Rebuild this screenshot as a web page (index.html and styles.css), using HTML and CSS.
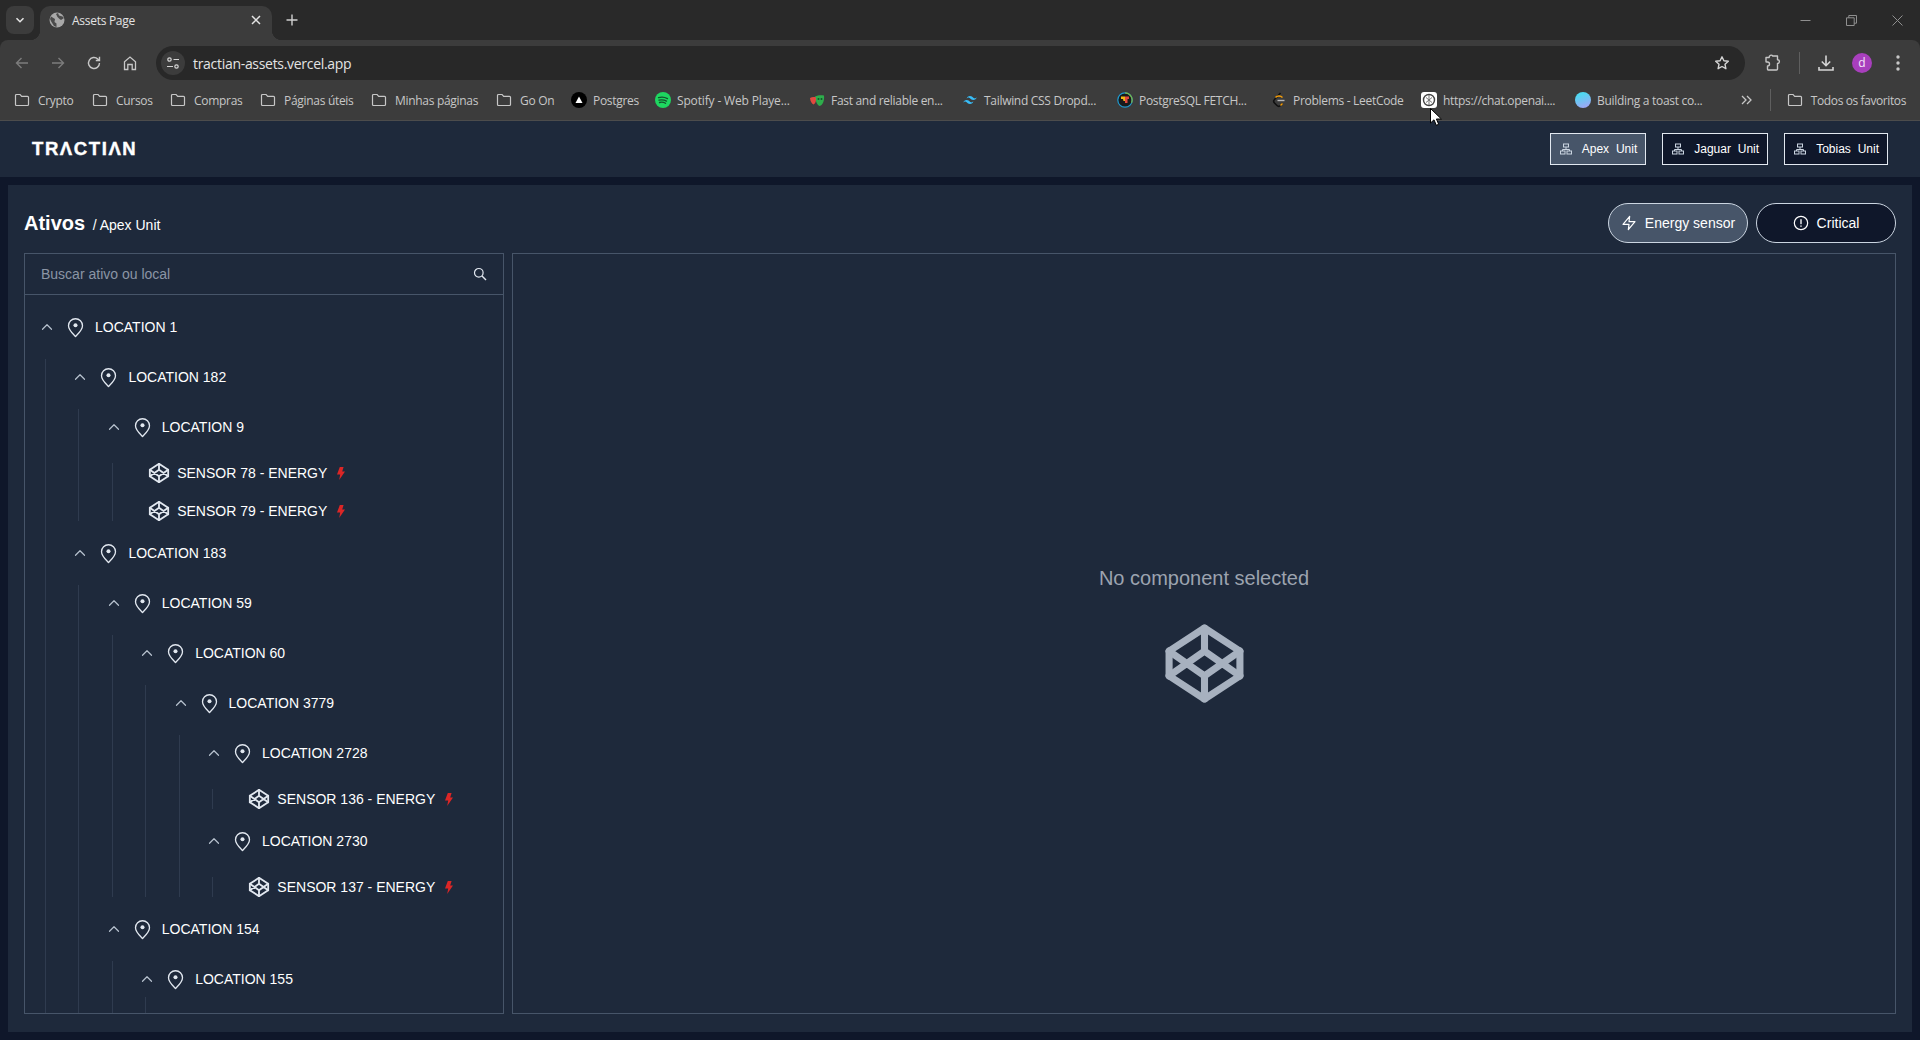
FILE: index.html
```html
<!DOCTYPE html>
<html lang="pt-BR">
<head>
<meta charset="utf-8">
<title>Assets Page</title>
<link rel="stylesheet" href="styles.css">
</head>
<body>
<svg class="sprite" aria-hidden="true">
  <symbol id="i-folder" viewBox="0 0 16 16"><path d="M1.5 3.5a1 1 0 0 1 1-1h3.6l1.6 1.8h5.8a1 1 0 0 1 1 1v7.2a1 1 0 0 1-1 1H2.500a1 1 0 0 1-1-1z" fill="none" stroke="currentColor" stroke-width="1.2"/></symbol>
  <symbol id="i-chev" viewBox="0 0 24 24"><path d="m18 15-6-6-6 6" fill="none" stroke="currentColor" stroke-width="1.6" stroke-linecap="round" stroke-linejoin="round"/></symbol>
  <symbol id="i-pin" viewBox="0 0 24 24"><path d="M20 10c0 5-5.500 9.500-8 12.300C9.500 19.500 4 15 4 10a8 8 0 0 1 16 0" fill="none" stroke="currentColor" stroke-width="1.5" stroke-linejoin="round"/><circle cx="12" cy="9.300" r="2.300" fill="currentColor"/></symbol>
  <symbol id="i-code" viewBox="0 0 24 24"><g fill="none" stroke="currentColor" stroke-width="2" stroke-linecap="round" stroke-linejoin="round"><path d="M12 2 22 8.500V15.500L12 22 2 15.500V8.500Z"/><path d="M12 22V15.500M22 8.500 12 15.500 2 8.500M2 15.500 12 8.500 22 15.500M12 2V8.500"/></g></symbol>
  <symbol id="i-bolt" viewBox="0 0 8 13"><path d="M2.800 0H6.600L5.200 4.600H8L2.200 13 3.200 7.600H0z" fill="currentColor"/></symbol>
  <symbol id="i-unit" viewBox="0 0 12 12"><g fill="none" stroke="currentColor" stroke-width="1"><rect x="3.500" y="1" width="5" height="3"/><rect x=".5" y="8" width="4.500" height="3"/><rect x="7" y="8" width="4.500" height="3"/><path d="M6 4v2.500M2.500 8V6.500h7V8"/></g></symbol>
</svg>

<header class="browser">
  <div class="tabstrip">
    <button class="tab-search" aria-label="Pesquisar guias"><svg width="12" height="12" viewBox="0 0 12 12"><path d="m2.500 4.200 3.500 3.500 3.500-3.500" fill="none" stroke="#e3e3e3" stroke-width="1.600"/></svg></button>
    <div class="tab">
      <svg class="tab-fav" width="16" height="16" viewBox="0 0 16 16"><circle cx="8" cy="8" r="7.500" fill="#a8a8a8"/><path d="M2 4.500 6 7l-.5 3 2 1.500V15L5 14 2.500 10 1 7zM9 1l1 2.500 3.500 1L15 6l-3 2-1.500-1L8.500 5 7 2z" fill="#4a4a4a"/></svg>
      <span class="tab-title">Assets Page</span>
      <svg class="tab-close" width="10" height="10" viewBox="0 0 10 10"><path d="m1 1 8 8M9 1 1 9" stroke="#e3e3e3" stroke-width="1.500"/></svg>
    </div>
    <button class="new-tab" aria-label="Nova guia"><svg width="12" height="12" viewBox="0 0 12 12"><path d="M6 .5v11M.5 6h11" stroke="#d0d0d0" stroke-width="1.400"/></svg></button>
    <div class="window-controls">
      <span class="win-btn"><svg width="11" height="11" viewBox="0 0 11 11"><path d="M.5 5.500h10" stroke="#8f8f8f"/></svg></span>
      <span class="win-btn"><svg width="11" height="11" viewBox="0 0 11 11"><path d="M.5 2.800h7.700v7.700H.5zM2.800 2.800V.5h7.700v7.700H8.200" fill="none" stroke="#8f8f8f"/></svg></span>
      <span class="win-btn"><svg width="11" height="11" viewBox="0 0 11 11"><path d="m.5.500 10 10M10.500.500l-10 10" stroke="#8f8f8f"/></svg></span>
    </div>
  </div>

  <div class="toolbar">
    <span class="tool"><svg width="16" height="16" viewBox="0 0 16 16"><path d="M14 8H3M7.500 3 2.500 8l5 5" fill="none" stroke="#7c7c7c" stroke-width="1.400"/></svg></span>
    <span class="tool"><svg width="16" height="16" viewBox="0 0 16 16"><path d="M2 8h11M8.500 3l5 5-5 5" fill="none" stroke="#7c7c7c" stroke-width="1.400"/></svg></span>
    <span class="tool"><svg width="16" height="16" viewBox="0 0 16 16"><path d="M13.500 8a5.500 5.500 0 1 1-1.700-4L13.500 5.500M13.500 1.800v3.700H9.800" fill="none" stroke="#c7c7c7" stroke-width="1.400"/></svg></span>
    <span class="tool"><svg width="16" height="16" viewBox="0 0 16 16"><path d="M2.500 14.500V6.700L8 2l5.500 4.700v7.800h-3.300V9.500H5.800v5z" fill="none" stroke="#c7c7c7" stroke-width="1.300"/></svg></span>
    <div class="address">
      <span class="site-info"><svg width="14" height="14" viewBox="0 0 14 14"><g fill="none" stroke="#d5d5d5" stroke-width="1.200"><circle cx="3.500" cy="3.500" r="1.700"/><path d="M7.500 3.500H13M1 10.500h6"/><circle cx="10.500" cy="10.500" r="1.700"/></g></svg></span>
      <span class="url">tractian-assets.vercel.app</span>
      <svg class="star" width="16" height="16" viewBox="0 0 16 16"><path d="m8 1.800 1.900 4 4.400.5-3.300 3 .9 4.400L8 11.500l-3.900 2.200.9-4.400-3.300-3 4.400-.5z" fill="none" stroke="#d5d5d5" stroke-width="1.400" stroke-linejoin="round"/></svg>
    </div>
    <span class="tool tool-ext"><svg width="18" height="18" viewBox="0 0 18 18"><path d="M2 3.500h3.200a2 2 0 0 1 3.600-1.500h4.700v3.700a1.900 1.900 0 0 1 0 3.800V15a1 1 0 0 1-1 1H4.500a1 1 0 0 1-1-1v-3h0a2 2 0 0 0 0-4H2.500a.5.500 0 0 1-.5-.5z" fill="none" stroke="#c7c7c7" stroke-width="1.400" stroke-linejoin="round"/></svg></span>
    <span class="tool-sep"></span>
    <span class="tool"><svg width="18" height="18" viewBox="0 0 18 18"><path d="M9 1.500v10M4.800 7.500 9 11.700l4.200-4.200M2 13v3h14v-3" fill="none" stroke="#d5d5d5" stroke-width="1.600"/></svg></span>
    <span class="tool"><span class="avatar">d</span></span>
    <span class="tool"><svg width="4" height="16" viewBox="0 0 4 16"><circle cx="2" cy="2" r="1.700" fill="#c7c7c7"/><circle cx="2" cy="8" r="1.700" fill="#c7c7c7"/><circle cx="2" cy="14" r="1.700" fill="#c7c7c7"/></svg></span>
  </div>

  <nav class="bookmarks">
    <div class="bm-list">
      <span class="bm"><svg class="bm-icon"><use href="#i-folder"/></svg><span>Crypto</span></span>
      <span class="bm"><svg class="bm-icon"><use href="#i-folder"/></svg><span>Cursos</span></span>
      <span class="bm"><svg class="bm-icon"><use href="#i-folder"/></svg><span>Compras</span></span>
      <span class="bm"><svg class="bm-icon"><use href="#i-folder"/></svg><span>Páginas úteis</span></span>
      <span class="bm"><svg class="bm-icon"><use href="#i-folder"/></svg><span>Minhas páginas</span></span>
      <span class="bm"><svg class="bm-icon"><use href="#i-folder"/></svg><span>Go On</span></span>
      <span class="bm bm-fav"><svg class="bm-icon" viewBox="0 0 16 16"><circle cx="8" cy="8" r="8" fill="#000"/><path d="M8 4.500 11.500 11h-7z" fill="#fff"/></svg><span>Postgres</span></span>
      <span class="bm bm-fav"><svg class="bm-icon" viewBox="0 0 16 16"><circle cx="8" cy="8" r="8" fill="#1ed760"/><path d="M3.500 5.700c3-.9 6.200-.6 9 .9M4 8.200c2.500-.7 5.200-.4 7.500.9M4.500 10.500c2-.5 4.200-.3 6 .8" fill="none" stroke="#14532d" stroke-width="1.300" stroke-linecap="round"/></svg><span class="bm-wide">Spotify - Web Playe...</span></span>
      <span class="bm bm-fav"><svg class="bm-icon" viewBox="0 0 16 16"><path d="M6 4.500c3-1.500 6-1.500 9-1 .5 5-1 9.500-4.500 10.500C8 13 6.500 9 6 4.500z" fill="#2ead4b"/><path d="M1 6c2-1 4-1.200 6-.5.300 3.500-.5 6-2.500 7C2.500 11.500 1.300 9 1 6z" fill="#e2493f"/><circle cx="9.500" cy="7" r="1" fill="#14532d"/><circle cx="12.500" cy="7" r="1" fill="#14532d"/></svg><span>Fast and reliable en...</span></span>
      <span class="bm bm-fav"><svg class="bm-icon" viewBox="0 0 24 24"><path d="M12 6c-2.670 0-4.330 1.330-5 4 1-1.330 2.170-1.830 3.500-1.500.76.190 1.300.740 1.910 1.350.980 1 2.120 2.150 4.590 2.150 2.670 0 4.330-1.330 5-4-1 1.330-2.170 1.830-3.500 1.500-.760-.190-1.300-.740-1.910-1.350C15.610 7.150 14.470 6 12 6zm-5 6c-2.670 0-4.330 1.330-5 4 1-1.330 2.170-1.830 3.500-1.500.760.190 1.300.740 1.910 1.350C8.390 16.850 9.530 18 12 18c2.670 0 4.330-1.330 5-4-1 1.330-2.170 1.830-3.500 1.500-.760-.190-1.300-.740-1.910-1.350C10.610 13.150 9.470 12 7 12z" fill="#38bdf8"/></svg><span>Tailwind CSS Dropd...</span></span>
      <span class="bm bm-fav"><svg class="bm-icon" viewBox="0 0 16 16"><circle cx="8" cy="8" r="7.200" fill="#1a1a1a" stroke="#1f9bd1" stroke-width="1.200"/><path d="M8 .8a7.200 7.200 0 0 1 6.500 10" fill="none" stroke="#7ab648" stroke-width="1.200"/><path d="M4 4.500h4V9H6.500L6 7H4z" fill="#f5b914"/><path d="M8 4.500h4V7h-1.500v4H8z" fill="#e2493f"/></svg><span>PostgreSQL FETCH...</span></span>
      <span class="bm bm-fav"><svg class="bm-icon" viewBox="0 0 16 16"><path d="M9.500 1 3.500 7.500a2.500 2.500 0 0 0 0 3.500l2.500 2.500a2.500 2.500 0 0 0 3.500 0L11.500 11.500" fill="none" stroke="#111" stroke-width="1.600"/><path d="M4.500 5.500C6 3.800 9.500 3.500 11.500 5.500M9.500 13.500l2-2" fill="none" stroke="#f59e0b" stroke-width="1.500"/><path d="M6.500 8.500h7" stroke="#b8b8b8" stroke-width="1.400"/></svg><span>Problems - LeetCode</span></span>
      <span class="bm bm-fav"><svg class="bm-icon" viewBox="0 0 16 16"><rect width="16" height="16" rx="3" fill="#fff"/><circle cx="8" cy="8" r="5.500" fill="none" stroke="#444" stroke-width="1.400"/><path d="M5 5.500 11 10.500M11 5.500 5 10.500M8 3v10" stroke="#777" stroke-width="1"/></svg><span>https://chat.openai....</span></span>
      <span class="bm bm-fav"><span class="orb"></span><span>Building a toast co...</span></span>
    </div>
    <div class="bm-right">
      <svg class="bm-more" width="11" height="10" viewBox="0 0 11 10"><path d="m1 1 4 4-4 4M6 1l4 4-4 4" fill="none" stroke="#c7c7c7" stroke-width="1.300"/></svg>
      <span class="bm-sep"></span>
      <span class="bm bm-all"><svg class="bm-icon"><use href="#i-folder"/></svg><span>Todos os favoritos</span></span>
    </div>
  </nav>
</header>

<svg class="cursor" width="12" height="18" viewBox="0 0 12 18"><path d="M.5.500v14.500l3.500-3.200 2.300 5.500 2.400-1-2.300-5.300h5z" fill="#fff" stroke="#000" stroke-width="1"/></svg>

<div class="app-header">
  <span class="logo" aria-label="TRACTIAN">TRΛCTIΛN</span>
  <div class="units">
    <button class="unit unit-active"><svg class="unit-icon"><use href="#i-unit"/></svg>Apex Unit</button>
    <button class="unit"><svg class="unit-icon"><use href="#i-unit"/></svg>Jaguar Unit</button>
    <button class="unit"><svg class="unit-icon"><use href="#i-unit"/></svg>Tobias Unit</button>
  </div>
</div>

<main class="panel">
  <div class="panel-head">
    <h1 class="title">Ativos <span class="crumb">/ Apex Unit</span></h1>
    <div class="filters">
      <button class="filter filter-active"><svg width="16" height="16" viewBox="0 0 24 24"><path d="M13 2 3 14h9l-1 8 10-12h-9z" fill="none" stroke="currentColor" stroke-width="1.800" stroke-linecap="round" stroke-linejoin="round"/></svg>Energy sensor</button>
      <button class="filter"><svg width="16" height="16" viewBox="0 0 24 24"><circle cx="12" cy="12" r="10" fill="none" stroke="currentColor" stroke-width="1.800"/><path d="M12 7v6M12 16.500v.5" stroke="currentColor" stroke-width="2" stroke-linecap="round"/></svg>Critical</button>
    </div>
  </div>

  <div class="panel-body">
    <section class="tree-panel">
      <div class="search">
        <input class="search-input" type="text" placeholder="Buscar ativo ou local">
        <svg class="search-icon" width="14" height="14" viewBox="0 0 14 14"><circle cx="5.800" cy="5.800" r="4.300" fill="none" stroke="#e2e8f0" stroke-width="1.200"/><path d="m9 9 4 4" stroke="#e2e8f0" stroke-width="1.400"/></svg>
      </div>
      <div class="tree">
        <div class="loc"><svg class="chev"><use href="#i-chev"/></svg><svg class="pin"><use href="#i-pin"/></svg><span>LOCATION 1</span></div>
        <div class="kids">
          <div class="loc"><svg class="chev"><use href="#i-chev"/></svg><svg class="pin"><use href="#i-pin"/></svg><span>LOCATION 182</span></div>
          <div class="kids">
            <div class="loc"><svg class="chev"><use href="#i-chev"/></svg><svg class="pin"><use href="#i-pin"/></svg><span>LOCATION 9</span></div>
            <div class="kids">
              <div class="sensor"><svg class="comp"><use href="#i-code"/></svg><span>SENSOR 78 - ENERGY</span><svg class="bolt"><use href="#i-bolt"/></svg></div>
              <div class="sensor"><svg class="comp"><use href="#i-code"/></svg><span>SENSOR 79 - ENERGY</span><svg class="bolt"><use href="#i-bolt"/></svg></div>
            </div>
          </div>
          <div class="loc"><svg class="chev"><use href="#i-chev"/></svg><svg class="pin"><use href="#i-pin"/></svg><span>LOCATION 183</span></div>
          <div class="kids">
            <div class="loc"><svg class="chev"><use href="#i-chev"/></svg><svg class="pin"><use href="#i-pin"/></svg><span>LOCATION 59</span></div>
            <div class="kids">
              <div class="loc"><svg class="chev"><use href="#i-chev"/></svg><svg class="pin"><use href="#i-pin"/></svg><span>LOCATION 60</span></div>
              <div class="kids">
                <div class="loc"><svg class="chev"><use href="#i-chev"/></svg><svg class="pin"><use href="#i-pin"/></svg><span>LOCATION 3779</span></div>
                <div class="kids">
                  <div class="loc"><svg class="chev"><use href="#i-chev"/></svg><svg class="pin"><use href="#i-pin"/></svg><span>LOCATION 2728</span></div>
                  <div class="kids">
                    <div class="sensor"><svg class="comp"><use href="#i-code"/></svg><span>SENSOR 136 - ENERGY</span><svg class="bolt"><use href="#i-bolt"/></svg></div>
                  </div>
                  <div class="loc"><svg class="chev"><use href="#i-chev"/></svg><svg class="pin"><use href="#i-pin"/></svg><span>LOCATION 2730</span></div>
                  <div class="kids">
                    <div class="sensor"><svg class="comp"><use href="#i-code"/></svg><span>SENSOR 137 - ENERGY</span><svg class="bolt"><use href="#i-bolt"/></svg></div>
                  </div>
                </div>
              </div>
            </div>
            <div class="loc"><svg class="chev"><use href="#i-chev"/></svg><svg class="pin"><use href="#i-pin"/></svg><span>LOCATION 154</span></div>
            <div class="kids">
              <div class="loc"><svg class="chev"><use href="#i-chev"/></svg><svg class="pin"><use href="#i-pin"/></svg><span>LOCATION 155</span></div>
              <div class="kids kids-more"></div>
            </div>
          </div>
        </div>
      </div>
    </section>
    <section class="details">
      <p class="empty-text">No component selected</p>
      <svg class="empty-icon"><use href="#i-code"/></svg>
    </section>
  </div>
</main>
</body>
</html>
```
FILE: styles.css
```css
* { box-sizing: border-box; }
html, body { margin: 0; height: 1040px; overflow: hidden; }
body {
  position: relative;
  background: #0f172a;
  color: #fff;
  font-family: "Liberation Sans", Arial, sans-serif;
  display: flex;
  flex-direction: column;
}
button { font: inherit; color: inherit; cursor: pointer; }
.sprite { position: absolute; width: 0; height: 0; }

/* Browser chrome */
.browser { flex: none; background: #292929; font-family: "Open Sans", "Noto Sans", sans-serif; }
.tabstrip {
  height: 40px;
  display: flex;
  padding: 6px 0 0 6px;
}
.tab-search {
  width: 28px; height: 28px; border: 0; border-radius: 8px; padding: 0;
  background: #3c3c3c;
  display: flex; align-items: center; justify-content: center;
}
.tab {
  position: relative;
  width: 232px; height: 34px; margin-left: 6px;
  background: #3c3c3c;
  border-radius: 10px 10px 0 0;
  display: flex; align-items: center;
  padding: 0 11px 6px 9px;
  font-size: 12px; color: #e3e3e3;
}
.tab::before, .tab::after {
  content: ""; position: absolute; bottom: 0; width: 10px; height: 10px;
}
.tab::before { left: -10px; background: radial-gradient(circle at 0 0, transparent 10px, #3c3c3c 10.500px); }
.tab::after { right: -10px; background: radial-gradient(circle at 100% 0, transparent 10px, #3c3c3c 10.500px); }
.tab-fav { flex: none; }
.tab-title { margin: 1px 0 0 7px; flex: 1; letter-spacing: -.28px; }
.tab-close { flex: none; }
.new-tab {
  width: 28px; height: 28px; border: 0; margin-left: 6px; padding: 0; background: none;
  display: flex; align-items: center; justify-content: center;
}
.window-controls { margin-left: auto; display: flex; margin-top: -6px; }
.win-btn { width: 46px; height: 40px; display: flex; align-items: center; justify-content: center; }

.toolbar {
  height: 42px;
  background: #3c3c3c;
  border-radius: 8px 8px 0 0;
  display: flex; align-items: center;
  padding: 4px 4px 0;
}
.tool { flex: none; width: 36px; height: 36px; display: flex; align-items: center; justify-content: center; }
.tool-ext { margin-left: 10px; }
.tool-sep { flex: none; width: 17px; height: 22px; display: flex; justify-content: center; }
.tool-sep::before { content: ""; width: 1px; height: 100%; background: #5f5f5f; }
.avatar {
  width: 20px; height: 20px; border-radius: 50%;
  background: #a83fbd; color: #f5e6f8;
  font-size: 12px; line-height: 20px; text-align: center;
}
.address {
  flex: 1; height: 34px; margin-left: 8px;
  background: #282828; border-radius: 17px;
  display: flex; align-items: center;
  padding: 0 15px 0 5px;
}
.site-info {
  width: 24px; height: 24px; border-radius: 50%;
  background: #3c3c3c;
  display: flex; align-items: center; justify-content: center;
}
.url { margin-left: 8px; flex: 1; font-size: 14px; color: #e3e3e3; letter-spacing: -.3px; }

.bookmarks {
  height: 39px;
  background: #3c3c3c;
  border-bottom: 1px solid #4c4c4c;
  display: flex; align-items: center; justify-content: space-between;
  padding: 0 14px 2px;
  font-size: 12px; color: #c7c7c7;
  letter-spacing: -.3px;
}
.bm-list {
  display: grid;
  grid-template-columns: 78px 78px 90px 111px 125px 75px 84px 154px 153px 155px 154px 150px 154px 130px;
  align-items: center;
}
.bm { display: flex; align-items: center; gap: 8px; white-space: nowrap; }
.bm-fav { gap: 6px; }
.bm-wide { letter-spacing: -.15px; }
.bm-icon { width: 16px; height: 16px; flex: none; }
.orb {
  width: 16px; height: 16px; border-radius: 50%; flex: none;
  background: linear-gradient(160deg, #4fd8f0 20%, #9aa8f5 85%);
}
.bm-right { display: flex; align-items: center; }
.bm-more { margin-right: 18px; }
.bm-sep { width: 1px; height: 22px; background: #5f5f5f; margin-right: 16px; }
.bm-all { letter-spacing: -.4px; }

.cursor { position: absolute; left: 1430px; top: 108px; z-index: 5; }

/* App header */
.app-header {
  flex: none; height: 56px;
  background: #1e293b;
  display: flex; align-items: center; justify-content: space-between;
  padding: 0 32px;
}
.logo {
  font-family: "Liberation Sans", Arial, sans-serif;
  font-weight: 700; font-size: 18.500px; letter-spacing: 1.600px;
  line-height: 1; color: #fff;
  -webkit-text-stroke: .4px #fff;
}
.units { display: flex; gap: 16px; }
.unit {
  height: 32px;
  display: flex; align-items: center; gap: 10px;
  padding: 0 8px 0 9px;
  border: 1px solid #e2e8f0;
  background: #0f172a;
  font-size: 12px; word-spacing: 3.500px;
  white-space: nowrap;
}
.unit-active { background: #475569; }
.unit-icon { width: 12px; height: 12px; color: #cbd5e1; flex: none; }

/* Main panel */
.panel {
  flex: none; height: 847px; margin: 8px 8px 0;
  background: #1e293b;
  padding: 18px 16px;
  display: flex; flex-direction: column;
}
.panel-head { flex: none; height: 40px; margin-bottom: 10px; display: flex; align-items: center; justify-content: space-between; }
.title { margin: 1px 0 0; font-size: 20px; font-weight: 700; line-height: 24px; }
.crumb { font-size: 14px; font-weight: 400; margin-left: 2px; }
.filters { display: flex; gap: 8px; }
.filter {
  width: 140px; height: 40px;
  border: 1px solid #cbd5e1; border-radius: 20px;
  background: #0f172a;
  display: flex; align-items: center; justify-content: center; gap: 8px;
  font-size: 14px;
  padding: 0;
}
.filter-active { background: #475569; }
.panel-body { flex: 1; min-height: 0; display: flex; gap: 8px; }

.tree-panel {
  flex: none; width: 480px;
  border: 1px solid #475569;
  display: flex; flex-direction: column;
  overflow: hidden;
}
.search {
  flex: none; height: 41px;
  border-bottom: 1px solid #475569;
  display: flex; align-items: center;
  padding: 0 16px;
}
.search-input {
  flex: 1; border: 0; outline: 0; background: none; padding: 0;
  font: 14px "Liberation Sans", Arial, sans-serif; color: #fff;
}
.search-input::placeholder { color: #8b95a5; opacity: 1; }
.tree { flex: 1; min-height: 0; overflow: hidden; padding: 14px 0 0 13px; }
.loc {
  height: 36px; margin-top: 14px;
  display: flex; align-items: center; gap: 9px;
  font-size: 14px; white-space: nowrap;
}
.tree > .loc:first-child { margin-top: 0; }
.chev { width: 18px; height: 18px; color: #b8c2cf; flex: none; }
.pin { width: 21px; height: 21px; color: #e2e8f0; flex: none; }
.kids {
  margin-left: 7px;
  padding-left: 25.400px;
  border-left: 1px solid #2f3b4f;
}
.kids-more { height: 60px; }
.sensor {
  height: 20px; margin-top: 18px;
  display: flex; align-items: center;
  padding-left: 10px;
  font-size: 14px; white-space: nowrap;
}
.comp { width: 22px; height: 22px; color: #e2e8f0; flex: none; margin-right: 7px; }
.bolt { width: 8px; height: 13px; color: #dc2626; flex: none; margin-left: 10px; }

.details {
  flex: 1;
  border: 1px solid #475569;
  display: flex; flex-direction: column; align-items: center; justify-content: center;
  gap: 29px;
  padding-top: 2px;
}
.empty-text { margin: 0; font-size: 20px; line-height: 28px; color: #9ca3af; }
.empty-icon { width: 85px; height: 85px; color: #a7b1bf; }
```
